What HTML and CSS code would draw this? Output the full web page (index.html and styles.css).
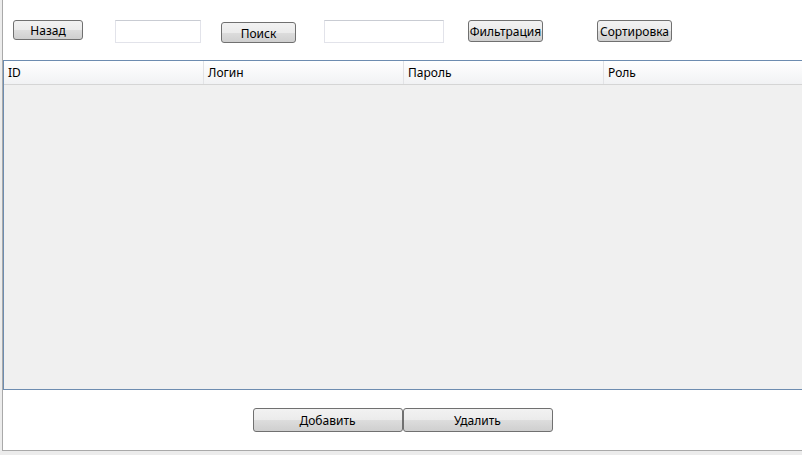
FILE: index.html
```html
<!DOCTYPE html>
<html lang="ru">
<head>
    <meta charset="UTF-8">
    <title>Пользователи</title>
    <link rel="stylesheet" href="styles.css">
</head>
<body>
    <div class="window">
        <div class="toolbar">
            <button class="btn btn-back">Назад</button>
            <input class="textbox tb-search" type="text">
            <button class="btn btn-search">Поиск</button>
            <input class="textbox tb-filter" type="text">
            <button class="btn btn-filter">Фильтрация</button>
            <button class="btn btn-sort">Сортировка</button>
        </div>

        <div class="grid">
            <div class="grid-header">
                <div class="col">ID</div>
                <div class="col">Логин</div>
                <div class="col">Пароль</div>
                <div class="col">Роль</div>
            </div>
            <div class="grid-body"></div>
        </div>

        <div class="actions">
            <button class="btn btn-wide">Добавить</button>
            <button class="btn btn-wide">Удалить</button>
        </div>
    </div>
</body>
</html>
```

FILE: styles.css
```css
* {
    margin: 0;
    padding: 0;
    box-sizing: border-box;
}

body {
    font-family: "Noto Sans", "Open Sans", sans-serif;
    font-size: 12px;
    color: #000;
    background: #ececec;
    width: 802px;
    height: 455px;
    overflow: hidden;
}

.window {
    margin-left: 2px;
    width: 800px;
    height: 451px;
    background: #fff;
    border-left: 1px solid #a9a9a9;
    border-bottom: 1px solid #a9a9a9;
    display: flex;
    flex-direction: column;
}

.toolbar {
    height: 60px;
    display: flex;
    align-items: flex-start;
    padding-top: 20px;
    padding-left: 10px;
}

.btn {
    font-family: inherit;
    font-size: 12px;
    color: #000;
    border: 1px solid #707070;
    border-radius: 3px;
    background: linear-gradient(#f2f2f2 0%, #ebebeb 50%, #dddddd 50%, #cfcfcf 100%);
    line-height: 1;
    padding-top: 2px;
    cursor: pointer;
}

.btn-back {
    width: 70px;
    height: 20px;
}

.textbox {
    border: 1px solid #e2e3ea;
    border-top-color: #c9ccd3;
    background: #fff;
    height: 23px;
}

.tb-search {
    width: 86px;
    margin-left: 32px;
}

.btn-search {
    width: 75px;
    height: 21px;
    margin-top: 2px;
    margin-left: 20px;
}

.tb-filter {
    width: 120px;
    margin-left: 28px;
}

.btn-filter {
    width: 75px;
    height: 22px;
    margin-left: 24px;
}

.btn-sort {
    width: 75px;
    height: 22px;
    margin-left: 54px;
}

.grid {
    height: 330px;
    width: 805px;
    border: 1px solid #6d8cb0;
    border-right: none;
    background: #f0f0f0;
    display: flex;
    flex-direction: column;
}

.grid-header {
    height: 24px;
    display: flex;
    background: linear-gradient(#ffffff, #f1f2f4);
    border-bottom: 1px solid #d5d5d5;
}

.col {
    width: 200px;
    padding-left: 4px;
    display: flex;
    align-items: center;
    border-right: 1px solid #e2e3e6;
}

.grid-body {
    flex: 1;
}

.actions {
    display: flex;
    justify-content: center;
    padding-top: 18px;
}

.btn-wide {
    width: 150px;
    height: 24px;
}
```
